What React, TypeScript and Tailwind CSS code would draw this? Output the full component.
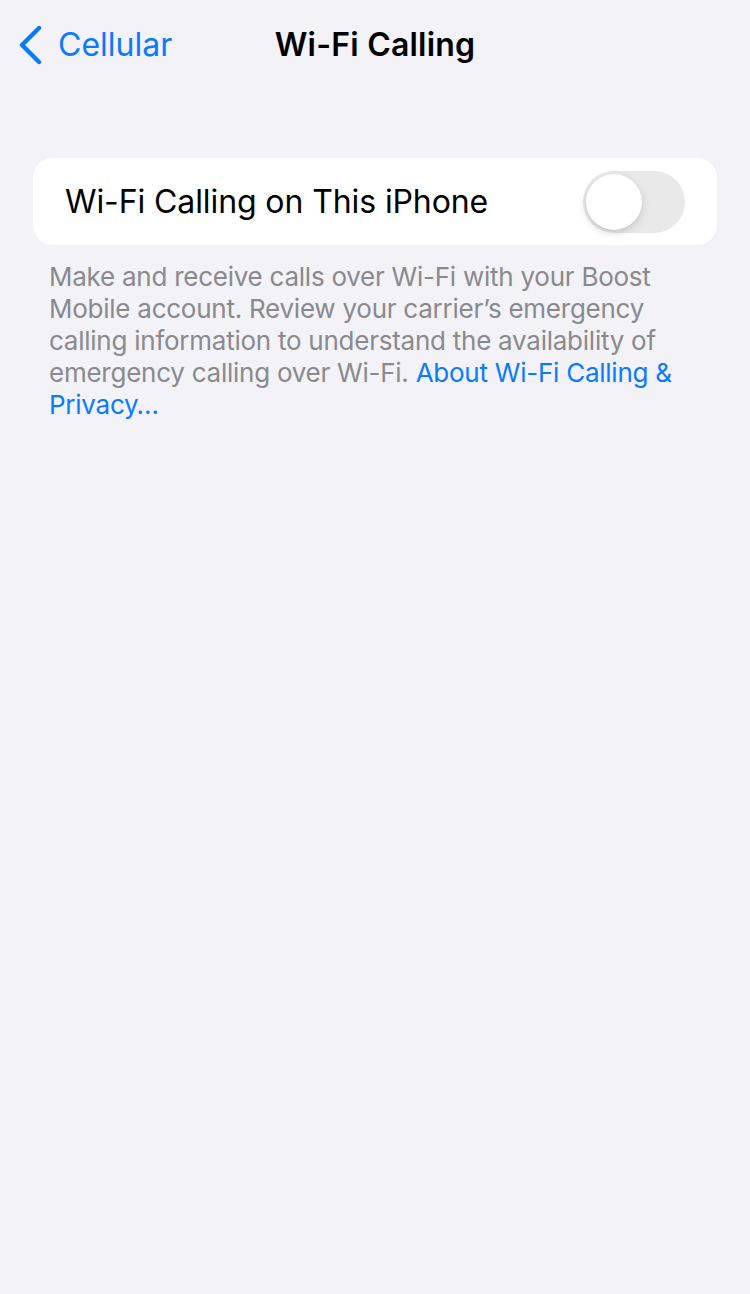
function BackChevron() {
  return (
    <svg width="26" height="40" viewBox="0 0 26 40" fill="none" className="shrink-0">
      <path
        d="M21 3 L4 20 L21 37"
        stroke="currentColor"
        strokeWidth="4.4"
        strokeLinecap="round"
        strokeLinejoin="round"
      />
    </svg>
  );
}

function Toggle({ on = false }: { on?: boolean }) {
  return (
    <div
      className={`relative h-[62px] w-[102px] shrink-0 rounded-full ${on ? "bg-[#34c759]" : "bg-[#e9e9ea]"}`}
    >
      <div
        className={`absolute top-[3px] h-[56px] w-[56px] rounded-full bg-white shadow-[0_3px_8px_rgba(0,0,0,0.15),0_1px_1px_rgba(0,0,0,0.06)] ${on ? "right-[3px]" : "left-[3px]"}`}
      />
    </div>
  );
}

export default function App() {
  return (
    <div className="min-h-[1294px] w-full bg-[#f2f2f7] font-['Inter','Liberation_Sans',sans-serif] antialiased">
      <header className="relative flex h-[90px] items-center">
        <button className="flex items-center gap-[14px] pl-[18px] text-[#0a7aff]">
          <BackChevron />
          <span className="text-[32px] leading-none">Cellular</span>
        </button>
        <h1 className="absolute left-1/2 -translate-x-1/2 text-[32px] font-semibold leading-none tracking-[0.2px] text-black">
          Wi-Fi Calling
        </h1>
      </header>

      <main className="px-[33px] pt-[68px]">
        <div className="flex h-[87px] items-center justify-between rounded-[20px] bg-white pl-[32px] pr-[32px]">
          <span className="text-[32px] tracking-[-0.1px] text-black">Wi-Fi Calling on This iPhone</span>
          <Toggle />
        </div>

        <p className="mt-[16px] px-[16px] text-[26px] leading-[32px] tracking-[-0.25px] text-[#8a8a8e]">
          Make and receive calls over Wi-Fi with your Boost Mobile account. Review your carrier’s
          emergency calling information to understand the availability of emergency calling over
          Wi-Fi. <span className="text-[#0a7aff]">About Wi-Fi Calling &amp; Privacy…</span>
        </p>
      </main>
    </div>
  );
}
